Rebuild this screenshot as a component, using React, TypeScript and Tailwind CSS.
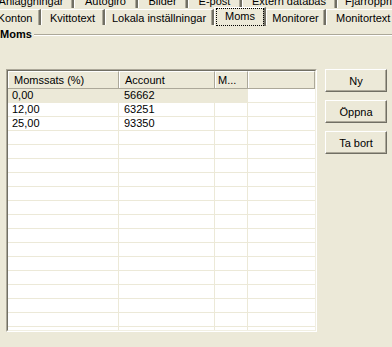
import React from "react";

const row1 = [
  { t: "Anläggningar", w: "w-[84px]" },
  { t: "Autogiro", w: "w-[64px]" },
  { t: "Bilder", w: "w-[50px]" },
  { t: "E-post", w: "w-[54px]" },
  { t: "Extern databas", w: "w-[95px]" },
];

const data: [string, string][] = [
  ["0,00", "56662"],
  ["12,00", "63251"],
  ["25,00", "93350"],
];

function Tab({ t, w }: { t: string; w: string }) {
  return (
    <div
      className={`${w} shrink-0 h-[16px] mt-[1px] pt-[1px] leading-[14px] text-center whitespace-nowrap border-t border-t-white border-l border-l-white border-r-2 border-r-[#716f64] shadow-[inset_-1px_0_0_#aca899]`}
    >
      {t}
    </div>
  );
}

function Btn({ label }: { label: string }) {
  return (
    <div className="h-[23px] w-[62px] flex items-center justify-center leading-[14px] border border-t-white border-l-white border-b-[#716f64] border-r-[#716f64] shadow-[inset_-1px_-1px_0_#aca899] bg-[#ece9d8]">
      {label}
    </div>
  );
}

export default function App() {
  const rows: ([string, string] | null)[] = [...data];
  for (let i = 0; i < 16; i++) rows.push(null);
  return (
    <div className="w-[392px] h-[347px] overflow-hidden bg-[#ece9d8] text-black text-[11px] font-['Liberation_Sans',Arial,sans-serif]">
      {/* Tab row 1 */}
      <div className="flex h-[17px] mt-[-9px] ml-[-11px] overflow-hidden">
        {row1.map((r, i) => (
          <Tab key={r.t} t={r.t} w={i === 0 ? "w-[85px]" : r.w} />
        ))}
        <div className="shrink-0 w-[80px] h-[16px] mt-[1px] pt-[1px] pl-[7px] leading-[14px] whitespace-nowrap border-t border-t-white border-l border-l-white">
          Fjärroppringning
        </div>
      </div>
      {/* Tab row 2 */}
      <div className="flex items-start h-[17px] ml-[-10px] relative">
        <Tab t="Konton" w="w-[51px]" />
        <Tab t="Kvittotext" w="w-[64px]" />
        <Tab t="Lokala inställningar" w="w-[109px]" />
        <div className="shrink-0 w-[52px] h-[19px] mt-[-1px] relative z-10 bg-[#ece9d8] border-t border-t-white border-l border-l-white border-r-2 border-r-[#716f64] shadow-[inset_-1px_0_0_#aca899]">
          <div className="ml-[1px] w-[48px] h-[18px] border border-dotted border-black leading-[14px] text-center whitespace-nowrap">
            Moms
          </div>
        </div>
        <Tab t="Monitorer" w="w-[60px]" />
        <div className="shrink-0 w-[80px] h-[16px] mt-[1px] pt-[1px] pl-[9px] leading-[14px] whitespace-nowrap border-t border-t-white border-l border-l-white">
          Monitortext
        </div>
      </div>
      {/* Group header */}
      <div className="flex items-center h-[14px] mt-[2px] leading-[14px]">
        <span className="font-bold">Moms</span>
        <div className="flex-1 ml-[2px] mt-[2px] h-[2px] border-t border-t-[#aca899] border-b border-b-white" />
      </div>
      {/* Content */}
      <div className="flex items-start pl-[6px] pt-[28px]">
        <div className="w-[311px] h-[263px] flex flex-col border border-t-[#aca899] border-l-[#aca899] border-b-white border-r-white">
          <div className="flex-1 flex flex-col overflow-hidden bg-white border border-t-[#716f64] border-l-[#716f64] border-b-[#f1efe2] border-r-[#f1efe2]">
            {/* Header */}
            <div className="flex h-[18px] shrink-0 bg-[#ece9d8] border-b border-b-[#aca899]">
              <div className="w-[111px] shrink-0 pl-[5px] pt-[1px] leading-[14px] border-t border-t-white border-l border-l-white border-r border-r-[#aca899] whitespace-nowrap">
                Momssats (%)
              </div>
              <div className="w-[96px] shrink-0 pl-[5px] pt-[1px] leading-[14px] border-t border-t-white border-l border-l-white border-r border-r-[#aca899] whitespace-nowrap">
                Account
              </div>
              <div className="w-[33px] shrink-0 pl-[2px] pt-[1px] leading-[14px] border-t border-t-white border-l border-l-white border-r border-r-[#aca899] whitespace-nowrap">
                M...
              </div>
              <div className="flex-1 border-t border-t-white border-l border-l-white border-r border-r-[#aca899]" />
            </div>
            {/* Rows */}
            {rows.map((r, i) => {
              const sel = i === 0;
              return (
                <div key={i} className="flex h-[14px] shrink-0 border-b border-b-[#ece9d8] leading-[13px]">
                  <div className={`w-[111px] shrink-0 pl-[4px] border-r ${sel ? "bg-[#ece9d8] border-r-[#ece9d8]" : "border-r-[#ece9d8]"}`}>
                    {r ? r[0] : ""}
                  </div>
                  <div className={`w-[96px] shrink-0 pl-[5px] border-r ${sel ? "bg-[#ece9d8] border-r-[#ece9d8]" : "border-r-[#ece9d8]"}`}>
                    {r ? r[1] : ""}
                  </div>
                  <div className={`w-[33px] shrink-0 border-r ${sel ? "bg-[#ece9d8] border-r-[#ece9d8]" : "border-r-[#ece9d8]"}`} />
                  <div className="flex-1" />
                </div>
              );
            })}
          </div>
        </div>
        <div className="flex flex-col gap-[8px] ml-[8px]">
          <Btn label="Ny" />
          <Btn label="Öppna" />
          <Btn label="Ta bort" />
        </div>
      </div>
    </div>
  );
}
